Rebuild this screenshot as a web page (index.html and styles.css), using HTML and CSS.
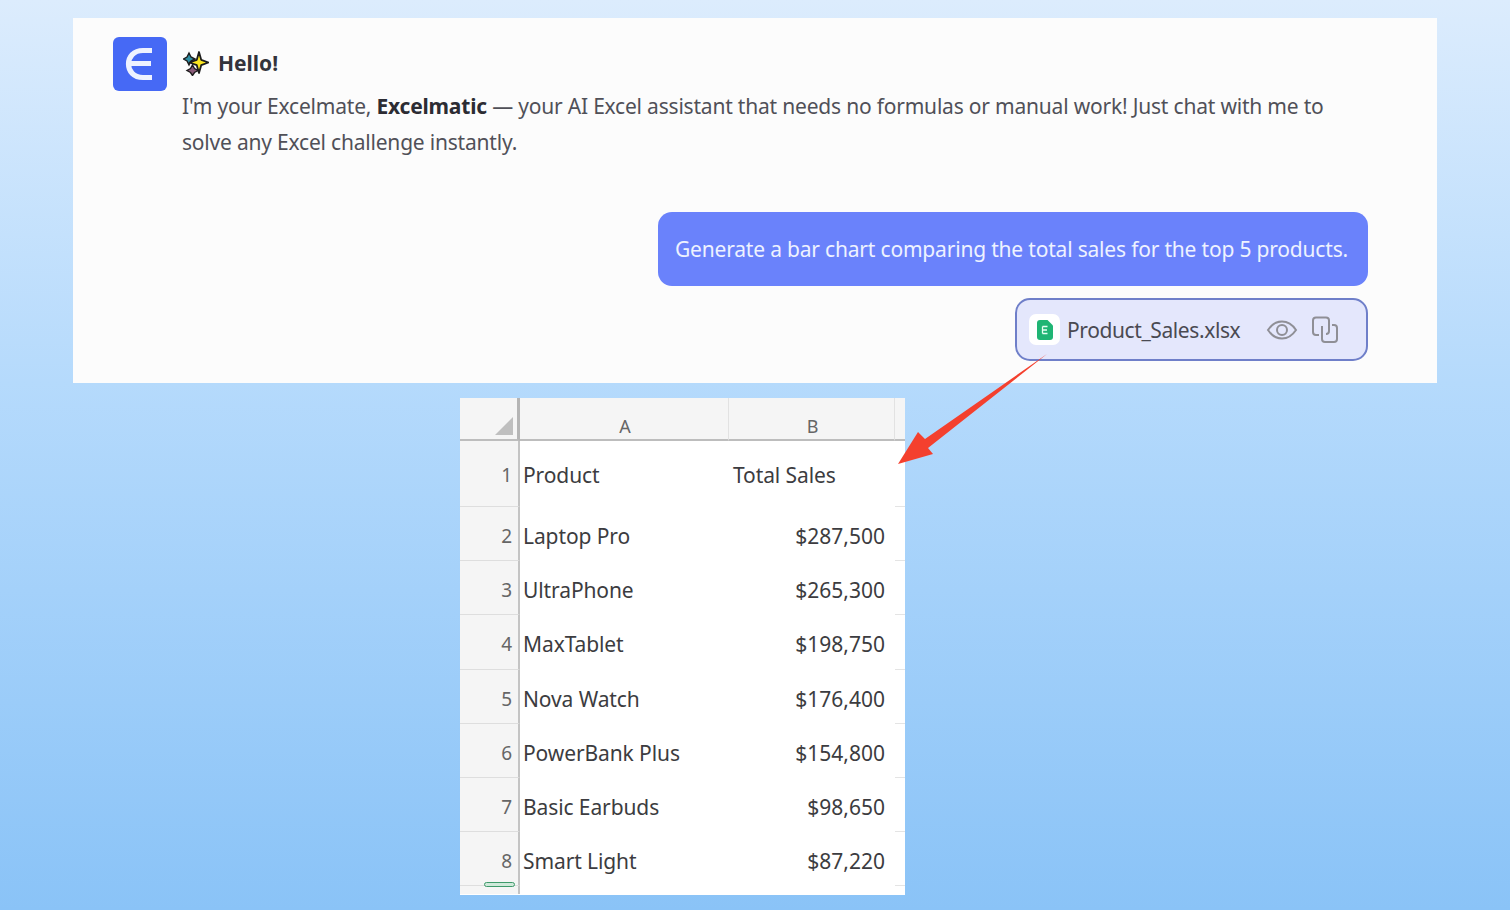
FILE: index.html
```html
<!DOCTYPE html>
<html lang="en">
<head>
    <meta charset="UTF-8">
    <meta name="viewport" content="width=device-width, initial-scale=1.0">
    <title>Excelmatic chat</title>
    <link rel="stylesheet" href="styles.css">
</head>
<body>
    <div class="page">
        <section class="chat-panel">
            <div class="bot-message">
                <div class="bot-logo">
                    <svg width="54" height="54" viewBox="0 0 54 54">
                        <path d="M39 13.500H30C20.500 13.500 15.500 20 15.500 27S20.500 40.500 30 40.500H39M16 26.500H38" fill="none" stroke="#eef2ff" stroke-width="5.200"/>
                    </svg>
                </div>
                <div class="bot-text">
                    <div class="hello">
                        <svg class="sparkles" width="26" height="26" viewBox="0 0 26 26">
                            <path d="M6 3L8 7L12 9L8 11L6 15L4 11L0.500 9L4 7Z" fill="#2f8fa5" stroke="#1c1c1c" stroke-width="1.400"/>
                            <path d="M9.500 15L11.500 18.500L15 20.500L11.500 22.500L9.500 25.500L7.500 22.500L4 20.500L7.500 18.500Z" fill="#8a5a78" stroke="#1c1c1c" stroke-width="1.400"/>
                            <path d="M16 2L18.200 9.800L25.500 12.500L18.200 15.200L16 23L13.800 15.200L6.500 12.500L13.800 9.800Z" fill="#fbe61e" stroke="#1c1c1c" stroke-width="1.800" stroke-linejoin="round"/>
                        </svg>
                        <strong>Hello!</strong>
                    </div>
                    <p>I'm your Excelmate, <strong>Excelmatic</strong> — your AI Excel assistant that needs no formulas or manual work! Just chat with me to solve any Excel challenge instantly.</p>
                </div>
            </div>
            <div class="user-bubble">Generate a bar chart comparing the total sales for the top 5 products.</div>
            <div class="file-chip">
                <span class="file-icon">
                    <svg width="16" height="20" viewBox="0 0 16 20">
                        <path d="M3 0H10.500L16 5.500V17A3 3 0 0 1 13 20H3A3 3 0 0 1 0 17V3A3 3 0 0 1 3 0Z" fill="#1fb574"/>
                        <path d="M5.500 6.500H10.500M5.500 10H10M5.500 13.500H10.500M5.500 6.500V13.500" fill="none" stroke="#e6fff2" stroke-width="1.300"/>
                    </svg>
                </span>
                <span class="file-name">Product_Sales.xlsx</span>
                <svg class="eye-icon" width="32" height="22" viewBox="0 0 32 22">
                    <path d="M2 11C6 5 10.500 2.500 16 2.500S26 5 30 11C26 17 21.500 19.500 16 19.500S6 17 2 11Z" fill="none" stroke="#8f8f96" stroke-width="2"/>
                    <circle cx="16" cy="11" r="5" fill="none" stroke="#8f8f96" stroke-width="2"/>
                </svg>
                <svg class="copy-icon" width="28" height="28" viewBox="0 0 28 28">
                    <path d="M8 19H5Q2 19 2 16V4.500Q2 1.500 5 1.500H15Q18 1.500 18 4.500V15Q18 18 15 18" fill="none" stroke="#8f8f96" stroke-width="2"/>
                    <path d="M11 10V23Q11 26 14 26H23Q26 26 26 23V12Q26 9 23 9H21" fill="none" stroke="#8f8f96" stroke-width="2"/>
                </svg>
            </div>
        </section>

        <section class="sheet">
            <div class="corner"><span class="corner-mark"></span></div>
            <div class="col-head col-a">A</div>
            <div class="col-head col-b">B</div>
            <div class="col-head col-rest"></div>

            <div class="row-num tall">1</div>
            <div class="cell tall">Product</div>
            <div class="cell tall">Total Sales</div>
            <div class="cell-rest tall"></div>

            <div class="row-num">2</div>
            <div class="cell">Laptop Pro</div>
            <div class="cell num">$287,500</div>
            <div class="cell-rest"></div>

            <div class="row-num">3</div>
            <div class="cell">UltraPhone</div>
            <div class="cell num">$265,300</div>
            <div class="cell-rest"></div>

            <div class="row-num">4</div>
            <div class="cell">MaxTablet</div>
            <div class="cell num">$198,750</div>
            <div class="cell-rest"></div>

            <div class="row-num">5</div>
            <div class="cell">Nova Watch</div>
            <div class="cell num">$176,400</div>
            <div class="cell-rest"></div>

            <div class="row-num">6</div>
            <div class="cell">PowerBank Plus</div>
            <div class="cell num">$154,800</div>
            <div class="cell-rest"></div>

            <div class="row-num">7</div>
            <div class="cell">Basic Earbuds</div>
            <div class="cell num">$98,650</div>
            <div class="cell-rest"></div>

            <div class="row-num last">8<span class="select-mark"></span></div>
            <div class="cell last">Smart Light</div>
            <div class="cell num last">$87,220</div>
            <div class="cell-rest last"></div>

            <div class="row-num stub"></div>
            <div class="cell stub"></div>
            <div class="cell stub"></div>
            <div class="cell-rest stub"></div>
        </section>

        <!-- arrow from the file chip down to the sheet -->
        <svg class="arrow" width="1510" height="910" viewBox="0 0 1510 910">
            <path d="M1047 354L928 448L933 454L898 464L918 432L925 439Z" fill="#f4402e"/>
        </svg>
    </div>
</body>
</html>
```
FILE: styles.css
```css
* {
    margin: 0;
    padding: 0;
    box-sizing: border-box;
}

body {
    background: linear-gradient(180deg, #dcecfd 0%, #b5dafc 42%, #8ac3f7 100%);
    font-family: 'Noto Sans', 'Open Sans', sans-serif;
    color: #505058;
}

.page {
    position: relative;
    width: 1510px;
    height: 910px;
    padding: 18px 73px 0;
    overflow: hidden;
}

.chat-panel {
    height: 365px;
    background-color: #fcfcfc;
    padding: 19px 69px 0 40px;
    display: flex;
    flex-direction: column;
    align-items: flex-end;
}

.bot-message {
    display: flex;
    align-self: stretch;
    gap: 15px;
}

.bot-logo {
    width: 54px;
    height: 54px;
    flex-shrink: 0;
    background-color: #4669f5;
    border-radius: 6px;
}

.bot-logo svg {
    display: block;
}

.bot-text {
    flex: 1;
    padding-top: 12px;
    font-size: 21px;
    line-height: 36px;
}

.hello {
    display: flex;
    align-items: center;
    gap: 9px;
    height: 28px;
    font-size: 21px;
    color: #33333b;
}

.sparkles {
    margin-left: 1px;
}

.bot-text p {
    margin-top: 11px;
    width: 1160px;
    letter-spacing: -0.2px;
}

.bot-text p strong {
    color: #2c2c33;
}

.user-bubble {
    margin-top: 52px;
    width: 710px;
    height: 74px;
    background-color: #6a82fb;
    border-radius: 14px;
    color: #eef2ff;
    font-size: 21px;
    letter-spacing: -0.19px;
    line-height: 74px;
    padding-left: 17px;
    white-space: nowrap;
}

.file-chip {
    margin-top: 12px;
    width: 353px;
    height: 63px;
    background-color: #e4e7fc;
    border: 2px solid #6f7fc9;
    border-radius: 15px;
    display: flex;
    align-items: center;
    padding-left: 12px;
    font-size: 21px;
    letter-spacing: -0.4px;
    color: #4a4a52;
}

.file-icon {
    width: 31px;
    height: 31px;
    background-color: #fff;
    border-radius: 7px;
    display: flex;
    align-items: center;
    justify-content: center;
    margin-right: 7px;
}

.file-name {
    width: 199px;
    white-space: nowrap;
}

.eye-icon {
    margin-right: 13px;
}

.sheet {
    margin: 15px 0 0 387px;
    width: 445px;
    height: 497px;
    background-color: #fff;
    display: grid;
    grid-template-columns: 60px 209px 166px 10px;
    grid-template-rows: 43px 66px repeat(7, 54.2px) 8px;
    font-size: 21px;
    color: #3c3c40;
    overflow: hidden;
}

.corner {
    background-color: #f5f5f5;
    border-right: 3px solid #b5b5b5;
    border-bottom: 2px solid #bdbdbd;
    position: relative;
}

.corner-mark {
    position: absolute;
    right: 4px;
    bottom: 4px;
    width: 0;
    height: 0;
    border-left: 18px solid transparent;
    border-bottom: 18px solid #bfbfbf;
}

.col-head {
    background-color: #f5f5f5;
    border-bottom: 2px solid #bdbdbd;
    font-size: 18px;
    color: #666;
    text-align: center;
    line-height: 56px;
    padding-left: 2px;
    height: 43px;
    overflow: hidden;
}

.col-a, .col-b {
    border-right: 1px solid #e2e2e2;
}

.row-num {
    position: relative;
    background-color: #f5f5f5;
    border-right: 2px solid #c4c4c4;
    border-bottom: 1px solid #dedede;
    font-size: 19px;
    color: #666;
    text-align: right;
    padding-right: 6px;
    line-height: 58px;
}

.cell {
    padding-left: 3px;
    line-height: 58px;
    letter-spacing: -0.1px;
    white-space: nowrap;
}

.cell.num {
    text-align: right;
    padding: 0 10px 0 0;
    letter-spacing: 0;
}

.cell-rest {
    border-bottom: 1px solid #e4e4e4;
}

.row-num.tall, .cell.tall {
    line-height: 68px;
}

.cell.tall + .cell.tall {
    padding-left: 4px;
}

.row-num.stub, .cell-rest.stub {
    border-bottom: 0;
}

.select-mark {
    position: absolute;
    left: 24px;
    bottom: -2px;
    width: 31px;
    height: 5px;
    background-color: #cfe9da;
    border: 1.5px solid #3f9a6b;
    border-radius: 3px;
    z-index: 1;
}

.arrow {
    position: absolute;
    left: 0;
    top: 0;
}
```
